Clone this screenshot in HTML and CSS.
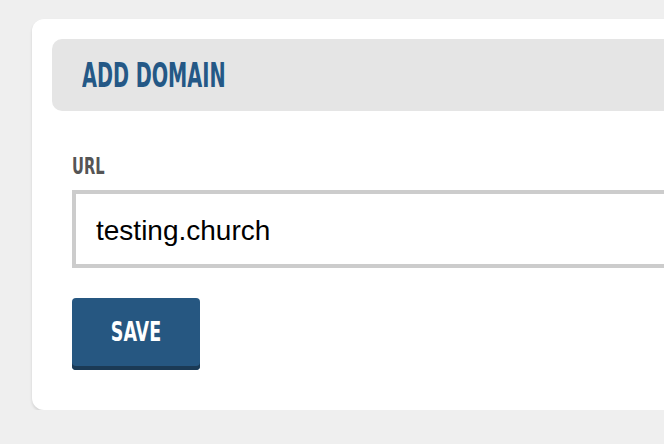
FILE: index.html
```html
<!DOCTYPE html>
<html lang="en">
  <head>
    <meta charset="UTF-8" />
    <meta name="viewport" content="width=device-width, initial-scale=1.0" />
    <title>Add domain</title>
    <link rel="stylesheet" href="styles.css">
  </head>

  <body>
    <div class="card">
      <div class="card__header">
        <h2 class="card__title">Add Domain</h2>
      </div>

      <form class="domain-form">
        <label for="url"><span class="condensed">URL</span></label>
        <input type="text" id="url" name="url" value="testing.church" />
        <button type="submit"><span class="condensed">Save</span></button>
      </form>
    </div>
  </body>
</html>
```

FILE: styles.css
```css
/* Reset */
html {
  box-sizing: border-box;
  font-size: 16px;
}

*,
*:before,
*:after {
  box-sizing: inherit;
}

body,
h1,
h2,
p {
  margin: 0;
  padding: 0;
  font-weight: normal;
}

body {
  background: #efefef;
  padding: 19px 0 0 32px;
  overflow: hidden;
  font-family: "Liberation Sans", Arial, sans-serif;
}

/* no DIN Condensed here, so squeeze DejaVu Condensed */
.condensed,
.card__title {
  display: inline-block;
  font-family: "DejaVu Sans Condensed", "DejaVu Sans", sans-serif;
  font-weight: bold;
  text-transform: uppercase;
  transform-origin: left center;
}

.card {
  width: 700px;
  background: #fff;
  border-radius: 12px;
  padding: 20px 20px 40px;
  box-shadow: 0 2px 3px rgba(0, 0, 0, 0.12);
}

.card__header {
  height: 72px;
  display: flex;
  align-items: center;
  padding-left: 30px;
  background: #e5e5e5;
  border-radius: 10px;
}

.card__title {
  font-size: 33px;
  color: #245886;
  transform: scaleX(0.65);
}

.domain-form {
  display: flex;
  flex-direction: column;
  align-items: flex-start;
  padding: 0 20px;
}

.domain-form label {
  margin-top: 42px;
  height: 27px;
  font-size: 23px;
  color: #555;
}

.domain-form label .condensed {
  transform: scaleX(0.71);
}

.domain-form input {
  margin-top: 10px;
  width: 100%;
  height: 78px;
  border: 4px solid #ccc;
  padding: 3px 20px 0;
  font-family: "Liberation Sans", Arial, sans-serif;
  font-size: 28px;
  color: #000;
  outline: none;
}

.domain-form button {
  margin-top: 30px;
  width: 128px;
  height: 72px;
  border: 0;
  border-radius: 4px;
  background: #265781;
  box-shadow: inset 0 -4px 0 #1b3a55;
  padding: 0 0 4px;
  font-size: 27px;
  color: #fff;
  cursor: pointer;
}

.domain-form button .condensed {
  transform: scaleX(0.72);
  transform-origin: center;
}
```
